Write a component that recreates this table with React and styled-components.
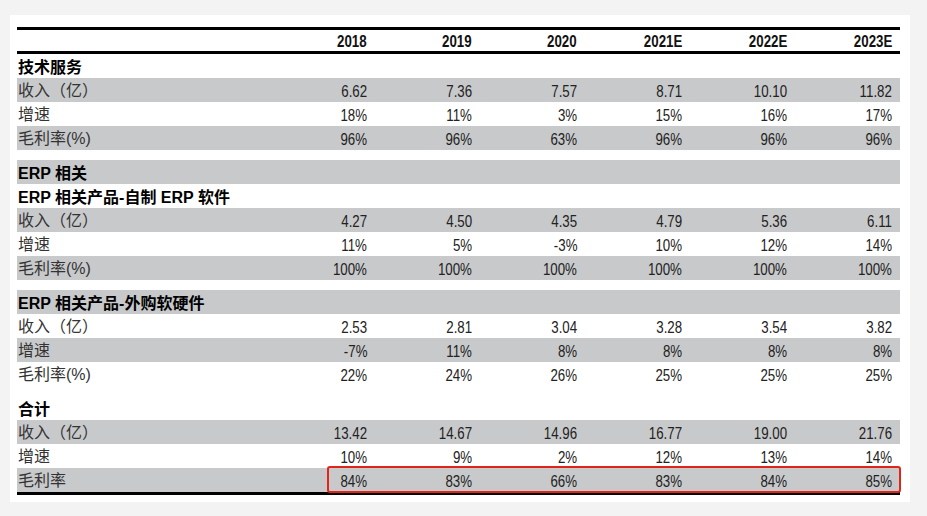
import React from "react";
import styled, { createGlobalStyle } from "styled-components";

const years = ["2018", "2019", "2020", "2021E", "2022E", "2023E"];

// kind: head (bold section title), row (data), gap (spacer)
const rows = [
  { kind: "head", label: "技术服务" },
  { kind: "row", label: "收入（亿）", shade: true, values: ["6.62", "7.36", "7.57", "8.71", "10.10", "11.82"] },
  { kind: "row", label: "增速", values: ["18%", "11%", "3%", "15%", "16%", "17%"] },
  { kind: "row", label: "毛利率(%)", shade: true, values: ["96%", "96%", "63%", "96%", "96%", "96%"] },
  { kind: "gap" },
  { kind: "head", label: "ERP 相关", shade: true },
  { kind: "head", label: "ERP 相关产品-自制 ERP 软件" },
  { kind: "row", label: "收入（亿）", shade: true, values: ["4.27", "4.50", "4.35", "4.79", "5.36", "6.11"] },
  { kind: "row", label: "增速", values: ["11%", "5%", "-3%", "10%", "12%", "14%"] },
  { kind: "row", label: "毛利率(%)", shade: true, values: ["100%", "100%", "100%", "100%", "100%", "100%"] },
  { kind: "gap" },
  { kind: "head", label: "ERP 相关产品-外购软硬件", shade: true },
  { kind: "row", label: "收入（亿）", values: ["2.53", "2.81", "3.04", "3.28", "3.54", "3.82"] },
  { kind: "row", label: "增速", shade: true, values: ["-7%", "11%", "8%", "8%", "8%", "8%"] },
  { kind: "row", label: "毛利率(%)", values: ["22%", "24%", "26%", "25%", "25%", "25%"] },
  { kind: "gap" },
  { kind: "head", label: "合计" },
  { kind: "row", label: "收入（亿）", shade: true, values: ["13.42", "14.67", "14.96", "16.77", "19.00", "21.76"] },
  { kind: "row", label: "增速", values: ["10%", "9%", "2%", "12%", "13%", "14%"] },
  { kind: "row", label: "毛利率", shade: true, values: ["84%", "83%", "66%", "83%", "84%", "85%"] },
];

const App = () => {
  return (
    <Page>
      <GlobalStyle />
      <Sheet>
        <Table>
          <colgroup>
            <LabelCol />
            {years.map((y) => (
              <ValueCol key={y} />
            ))}
          </colgroup>
          <thead>
            <HeaderRow>
              <th />
              {years.map((y) => (
                <YearCell key={y}>
                  <Narrow>{y}</Narrow>
                </YearCell>
              ))}
            </HeaderRow>
          </thead>
          <tbody>
            {rows.map((r, i) => {
              if (r.kind === "gap") {
                return (
                  <GapRow key={i}>
                    <td colSpan={7} />
                  </GapRow>
                );
              }
              if (r.kind === "head") {
                return (
                  <DataRow key={i} $shade={r.shade}>
                    <SectionCell colSpan={7}>{r.label}</SectionCell>
                  </DataRow>
                );
              }
              return (
                <DataRow key={i} $shade={r.shade}>
                  <LabelCell>{r.label}</LabelCell>
                  {r.values.map((v, j) => (
                    <ValueCell key={j}>
                      <Narrow>{v}</Narrow>
                    </ValueCell>
                  ))}
                </DataRow>
              );
            })}
          </tbody>
        </Table>
        <Highlight />
      </Sheet>
    </Page>
  );
};

const GlobalStyle = createGlobalStyle`
  html, body {
    margin: 0;
    padding: 0;
    background: #f3f3f3;
  }
`;

const Page = styled.div`
  width: 927px;
  height: 516px;
  background: #f3f3f3;
  padding: 15px 0 0 10px;
  box-sizing: border-box;
  font-family: "Liberation Sans", "Noto Sans CJK SC", sans-serif;
`;

const Sheet = styled.div`
  position: relative;
  width: 900px;
  height: 487px;
  background: #fff;
  padding: 12px 0 0 7px;
  box-sizing: border-box;
`;

const Table = styled.table`
  width: 883px;
  border-collapse: collapse;
  table-layout: fixed;
  border-top: 3px solid #000;
  border-bottom: 3px solid #000;
`;

const LabelCol = styled.col`
  width: 253px;
`;

const ValueCol = styled.col`
  width: 105px;
`;

const HeaderRow = styled.tr`
  height: 21px;
  border-bottom: 3px solid #000;
  & > th {
    padding: 0;
  }
`;

/* the source sheet uses a condensed face; squeeze the digits to match */
const Narrow = styled.span`
  display: inline-block;
  transform: scaleX(0.83);
  transform-origin: right center;
`;

const YearCell = styled.th`
  text-align: right;
  padding: 3px 8px 0 0 !important;
  font-size: 16px;
  font-weight: 700;
  color: #111;
  line-height: 18px;
`;

const DataRow = styled.tr`
  height: 24px;
  background: ${(p) => (p.$shade ? "#c8c9cb" : "#fff")};
`;

const GapRow = styled.tr`
  height: 10px;
  & > td {
    padding: 0;
  }
`;

const SectionCell = styled.td`
  padding: 3px 0 0 1px;
  font-size: 16px;
  font-weight: 700;
  color: #000;
  line-height: 21px;
  white-space: nowrap;
`;

const LabelCell = styled.td`
  padding: 2px 0 0 1px;
  font-size: 16px;
  color: #333;
  line-height: 22px;
  white-space: nowrap;
`;

const ValueCell = styled.td`
  padding: 3px 8px 0 0;
  text-align: right;
  font-size: 16px;
  color: #222;
  line-height: 21px;
`;

const Highlight = styled.div`
  position: absolute;
  left: 317px;
  top: 451px;
  width: 574px;
  height: 27px;
  box-sizing: border-box;
  border: 2.5px solid #e2231a;
  border-radius: 3px;
  pointer-events: none;
`;

export default App;
